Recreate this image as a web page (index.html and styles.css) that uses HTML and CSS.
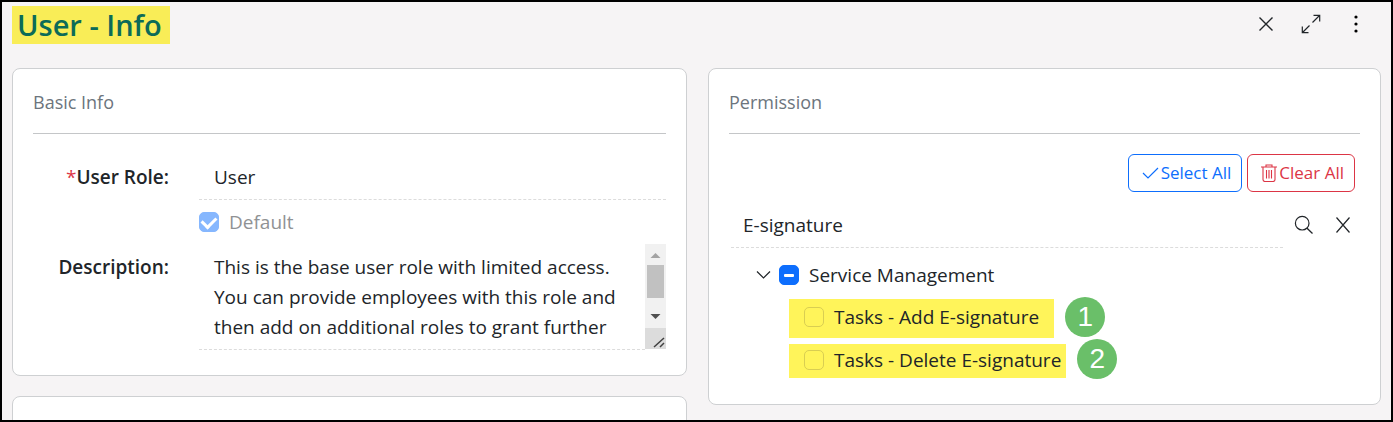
FILE: index.html
```html
<!DOCTYPE html>
<html lang="en">
<head>
<meta charset="utf-8">
<title>User - Info</title>
<link rel="stylesheet" href="styles.css">
</head>
<body>
<main class="frame">
  <header class="topbar">
    <h1 class="title">User - Info</h1>
    <div class="actions">
      <button class="icon-btn" type="button" aria-label="Close"><svg width="16" height="16" viewBox="0 0 16 16"><path d="M1.5 1.5l13 13M14.5 1.5l-13 13" fill="none" stroke="currentColor" stroke-width="1.4"/></svg></button>
      <button class="icon-btn" type="button" aria-label="Expand"><svg width="20" height="20" viewBox="0 0 20 20"><path d="M11.5 8.5l7-7M12.5 1.3h6.2v6.2M8.500 11.500l-7 7M1.300 12.500v6.200h6.200" fill="none" stroke="currentColor" stroke-width="1.200"/></svg></button>
      <button class="icon-btn" type="button" aria-label="More"><svg width="4" height="18" viewBox="0 0 4 18"><circle cx="2" cy="2" r="1.600"/><circle cx="2" cy="9" r="1.600"/><circle cx="2" cy="16" r="1.600"/></svg></button>
    </div>
  </header>
  <div class="columns">
    <div class="column">
      <section class="card basic">
        <h2 class="card-title">Basic Info</h2>
        <form class="form">
          <label class="label" for="role"><span class="required">*</span>User Role:</label>
          <input class="field" id="role" type="text" value="User">
          <div class="check-row">
            <input class="check checked" id="default" type="checkbox" checked disabled>
            <label class="muted" for="default">Default</label>
          </div>
          <label class="label" for="description">Description:</label>
          <div class="area">
            <textarea class="field area-text" id="description" rows="3">This is the base user role with limited access. You can provide employees with this role and then add on additional roles to grant further</textarea>
            <svg class="scrollbar" width="21" height="105" viewBox="0 0 21 105">
              <path d="M0 0h21v84H0z" fill="#f1f1f1"/>
              <path d="M2 21h17v33H2z" fill="#c1c1c1"/>
              <path d="M10.500 9l5 5h-10z" fill="#a3a3a3"/>
              <path d="M10.500 75l5-5h-10z" fill="#505050"/>
              <path d="M0 84h21v21H0z" fill="#dcdcdc"/>
              <path d="M9 103l10-9M15 103l4-4" fill="none" stroke="#404040" stroke-width="1.500"/>
            </svg>
          </div>
        </form>
      </section>
      <section class="card next"></section>
    </div>
    <section class="card permission">
      <h2 class="card-title">Permission</h2>
      <div class="bulk">
        <button class="btn select" type="button"><svg width="17" height="16" viewBox="0 0 17 16"><path d="M1 8l5 5L16 3" fill="none" stroke="currentColor" stroke-width="1.200"/></svg>Select All</button>
        <button class="btn clear" type="button"><svg width="16" height="18" viewBox="0 0 16 18"><path d="M0 3h16M5 3V1h6v2M2 3v12.500q0 2 2 2h8q2 0 2-2V3M5.500 6v8.500M8 6v8.500M10.500 6v8.500" fill="none" stroke="currentColor" stroke-width="1.100"/></svg>Clear All</button>
      </div>
      <div class="search">
        <input class="field" type="text" value="E-signature" aria-label="Search permissions">
        <button class="icon-btn" type="button" aria-label="Search"><svg width="20" height="20" viewBox="0 0 20 20"><path d="M12.800 13l5.700 5.500" stroke="currentColor" stroke-width="1.300"/><circle cx="8.200" cy="8.200" r="6.800" fill="none" stroke="currentColor" stroke-width="1.200"/></svg></button>
        <button class="icon-btn" type="button" aria-label="Clear search"><svg width="16" height="18" viewBox="0 0 16 18"><path d="M1.500 1.500l13 15M14.500 1.500l-13 15" fill="none" stroke="currentColor" stroke-width="1.200"/></svg></button>
      </div>
      <div class="parent">
        <button class="toggle" type="button" aria-label="Collapse"><svg width="15" height="10" viewBox="0 0 15 10"><path d="M1 1.500l6.500 6.500L14 1.500" fill="none" stroke="currentColor" stroke-width="1.200"/></svg></button>
        <input class="check partial" id="service" type="checkbox">
        <label for="service">Service Management</label>
      </div>
      <ul class="children">
        <li class="child"><span class="mark mark-tall"><input class="check on-yellow" id="add" type="checkbox"><label for="add">Tasks - Add E-signature</label></span><span class="badge">1</span></li>
        <li class="child"><span class="mark mark-short"><input class="check on-yellow" id="delete" type="checkbox"><label for="delete">Tasks - Delete E-signature</label></span><span class="badge">2</span></li>
      </ul>
    </section>
  </div>
</main>
</body>
</html>
```
FILE: styles.css
```css
* { box-sizing: border-box; }
body { margin: 0; }
body, input, button, textarea {
  font-family: "Open Sans", "Noto Sans", sans-serif;
  font-size: 19px;
  line-height: 30px;
  color: #212529;
}
.frame {
  display: flex;
  flex-direction: column;
  height: 100vh;
  overflow: hidden;
  border: 2px solid #000;
  background: #f6f4f5;
  padding: 4px 10px 0;
}
.topbar {
  display: flex;
  align-items: flex-start;
  justify-content: space-between;
  padding-right: 13px;
  margin-bottom: 24px;
}
.title {
  margin: 0;
  padding: 0 8px 0 5px;
  background: #f9ed57;
  color: #0c6b58;
  font-size: 29px;
  font-weight: 600;
  line-height: 38px;
}
.actions { display: flex; align-items: center; gap: 21px; height: 36px; }
.icon-btn, .toggle {
  display: flex;
  flex: none;
  justify-content: center;
  padding: 0;
  border: 0;
  background: none;
  color: #212529;
}
.icon-btn { width: 24px; }
.columns {
  display: grid;
  grid-template-columns: 675fr 673fr;
  gap: 21px;
  align-items: start;
}
.column { display: flex; flex-direction: column; gap: 20px; }
.card {
  background: #fff;
  border: 1px solid #ced0d2;
  border-radius: 8px;
  padding: 0 20px;
}
.basic { padding-bottom: 25px; }
.next { height: 80px; }
.permission { padding-bottom: 24px; }
.card-title {
  margin: 0 0 20px;
  padding: 18px 0 16px;
  border-bottom: 1px solid #c4c6c8;
  color: #6c757d;
  font-size: 18px;
  font-weight: 400;
}
.form {
  display: grid;
  grid-template-columns: 136px 1fr;
  column-gap: 30px;
}
.label { text-align: right; font-weight: 600; padding-top: 8px; }
.required { color: #dc3545; font-weight: 400; }
.field {
  min-width: 0;
  width: 100%;
  border: 0;
  border-bottom: 1px dashed #dcdcdc;
  background: none;
  padding: 8px 15px 7px;
  outline: 0;
}
.check-row {
  grid-column: 2;
  display: flex;
  align-items: center;
  gap: 10px;
  height: 44px;
}
.check {
  appearance: none;
  flex: none;
  width: 20px;
  height: 20px;
  margin: 0;
  border: 1px solid #bfbfbf;
  border-radius: 5px;
  display: grid;
  place-items: center;
}
.checked { background: #86b7fe; border-color: #86b7fe; }
.checked::before {
  content: "";
  width: 11px;
  height: 7px;
  border: solid #fff;
  border-width: 0 0 3px 3px;
  transform: translateY(-1px) rotate(-45deg);
}
.partial { background: #0d6efd; border-color: #0d6efd; }
.partial::before { content: ""; width: 10px; height: 3px; border-radius: 1px; background: #fff; }
.on-yellow { border-color: #d9ce52; }
.muted { color: #909294; }
.area { display: flex; }
.area-text { display: block; resize: none; overflow: hidden; }
.scrollbar { flex: none; }
.bulk { display: flex; justify-content: flex-end; gap: 5px; padding-right: 5px; }
.btn {
  display: flex;
  align-items: center;
  gap: 2px;
  height: 38px;
  padding: 0 10px 0 13px;
  border: 1px solid;
  border-radius: 6px;
  background: #fff;
  font-size: 17px;
}
.select { color: #0d6efd; }
.clear { color: #dc3545; }
.search {
  display: flex;
  align-items: center;
  gap: 15px;
  margin-top: 10px;
  padding: 0 5px 0 2px;
}
.search .field { margin-right: -6px; padding-left: 12px; }
.parent {
  display: flex;
  align-items: center;
  gap: 8px;
  padding: 12px 0 0 27px;
}
.parent label { padding-left: 2px; }
.children { list-style: none; margin: 6px 0 0; padding: 0 0 0 60px; }
.child { display: flex; align-items: center; gap: 11px; height: 42px; }
.mark {
  display: flex;
  align-items: center;
  gap: 10px;
  padding: 0 15px 3px;
  background: #fff45a;
}
.mark-tall { height: 39px; align-self: flex-end; }
.mark-short { height: 34px; margin-top: 6px; align-self: flex-start; padding-right: 5px; }
.badge {
  display: grid;
  place-items: center;
  width: 40px;
  height: 40px;
  border-radius: 50%;
  background: #6abf69;
  color: #fff;
  font-family: "Liberation Sans", Arial, sans-serif;
  font-size: 28px;
}
```
